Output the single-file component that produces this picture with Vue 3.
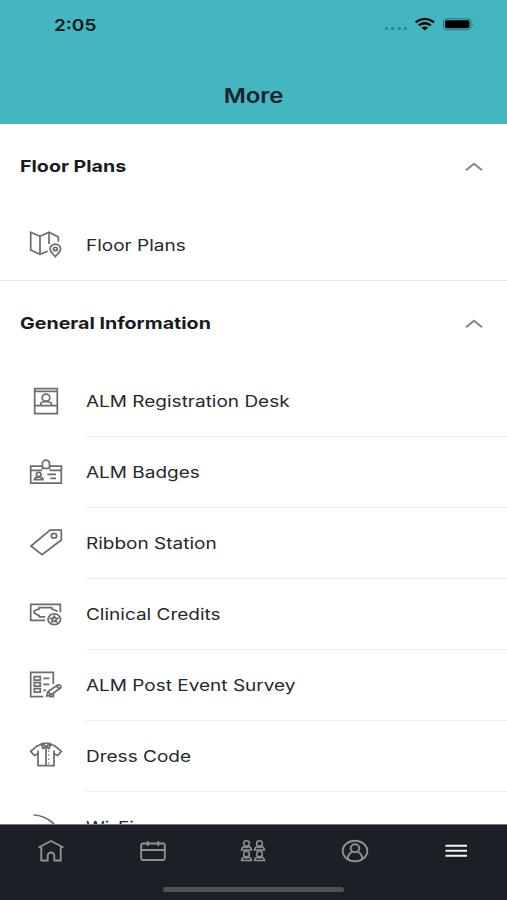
<script setup>
import { ref } from "vue";

const sections = ref([
  {
    title: "Floor Plans",
    open: true,
    items: [{ label: "Floor Plans", icon: "map" }],
  },
  {
    title: "General Information",
    open: true,
    items: [
      { label: "ALM Registration Desk", icon: "desk" },
      { label: "ALM Badges", icon: "badge" },
      { label: "Ribbon Station", icon: "tag" },
      { label: "Clinical Credits", icon: "credit" },
      { label: "ALM Post Event Survey", icon: "survey" },
      { label: "Dress Code", icon: "shirt" },
      { label: "Wi-Fi", icon: "wifi" },
    ],
  },
]);

const icons = {
  map: [
    "M19.7 22.3 12 25.3 2.7 21V3.3L12 7.3l9-4 9.3 4.7v4.7",
    "M12 7.3v18M21 3.3V15",
    "M27.3 27.6c-3-3.4-5.3-5.3-5.3-7.7a5.3 4.7 0 0 1 10.6 0c0 2.4-2.3 4.3-5.3 7.7z",
    "M25.3 20a2 1.7 0 1 0 4 0a2 1.7 0 1 0-4 0z",
  ],
  desk: [
    "M6.7 3.7h22.6v25H6.7z",
    "M6.7 6.3h22.6M6.7 20.7h22.6",
    "M14.2 12.7a3.8 3.5 0 1 0 7.6 0a3.8 3.5 0 1 0-7.6 0z",
    "M12.7 20.5v-2.3l3-1.7h4.6l3 1.7v2.3",
  ],
  badge: [
    "M14.3 10H2.7v17h30.6V10H21.7M2.7 14.3h11.6M21.7 14.3h11.6",
    "M14.5 12.3V7.5a3.5 3.3 0 0 1 7 0v4.8z",
    "M8.3 18.5a2.4 2.1 0 1 0 4.8 0a2.4 2.1 0 1 0-4.8 0z",
    "M6.3 23.7c.4-2 1.7-2.4 3-2.6h2.8c1.3.2 2.6.6 3 2.6z",
    "M19.3 18.3H28M22.3 22.3H28",
  ],
  tag: [
    "M22 3h11.3v10L14 27.7 3 19z",
    "M23.3 8.7a2.7 2.4 0 1 0 5.4 0a2.7 2.4 0 1 0-5.4 0z",
  ],
  credit: [
    "M32.3 14.2V6.3H2.7v16h14.5",
    "M17.2 18.9h-6v-1.3l-4.9-2.4v-2.4l4.9-2V9.6h12.5v1.2l4.9 2V14",
    "M20 21.3a6.3 5.3 0 1 0 12.6 0a6.3 5.3 0 1 0-12.6 0z",
    "m26.3 18.2 1 2 2.4.2-1.7 1.5.5 2-2.2-1-2.2 1 .5-2-1.7-1.5 2.4-.2z",
  ],
  survey: [
    "M25.3 15V3.3H2.7v24.4h12.6M20.7 27.7h4.6v-3.4",
    "M6.3 7.7h6v3.4h-6zM6.3 13.7h6v3.4h-6zM6.3 19.7h6v3.4h-6z",
    "M15.3 9.4h6M15.3 15.4h6M15.3 21.4H18",
    "M18.7 27 20 22.6l9.7-6.5c1.6-.8 4.3 1.2 3 2.7l-9.4 6.8zM20 22.6l3.3 3M28.3 17l3.2 2.8",
  ],
  shirt: [
    "M13.3 4.2 9 6 2.7 11.3l3.6 4.2 3.7-1.8v12h16v-12l3.7 1.8 3.6-4.2L27 6l-4.3-1.8",
    "M13.3 4.2l1.2-.9h7l1.2.9L21 8.500l-3-1.700-3 1.700zM14.500 4.300 18 6.800l3.500-2.500",
    "M18 7v18.500M20.300 11h1M20.300 15h1M20.300 19h1M20.300 23h1",
    "M10 10.500v3.200M26 10.500v3.200",
  ],
  wifi: ["M5.500 4q11.500.3 20.500 9"],
};

const people = [
  [2.5, 2],
  [15.5, 2],
  [2.5, 12.5],
  [15.5, 12.5],
];
</script>
<template>
  <div class="screen">
    <header class="header">
      <div class="status">
        <span class="time">2:05</span>
        <svg class="signals" width="92" height="18" viewBox="0 0 92 18">
          <g fill="#000" fill-opacity=".28">
            <circle cx="4.5" cy="13.5" r="1.6" />
            <circle cx="10.8" cy="13.5" r="1.6" />
            <circle cx="17.1" cy="13.5" r="1.6" />
            <circle cx="23.4" cy="13.5" r="1.6" />
          </g>
          <g fill="none" stroke="#000" stroke-width="2.3">
            <path d="M33.6 7.2q9.2-6.6 18.4 0" />
            <path d="M36.8 10.4q6-4.3 12 0" />
          </g>
          <path d="M39.4 12.5q3.4-2 6.8 0l-3.4 2.9z" />
          <rect x="61.5" y="3.8" width="27.5" height="11" rx="3.2" fill="none" stroke="#000" stroke-opacity=".38" />
          <rect x="63" y="5.3" width="24.5" height="8" rx="1.8" />
          <path d="M90.2 7.7q1.8 1.6 0 3.2z" fill-opacity=".45" />
        </svg>
      </div>
      <h1 class="title"><span>More</span></h1>
    </header>

    <main class="content">
      <section v-for="section in sections" :key="section.title" class="section">
        <div class="section-head" @click="section.open = !section.open">
          <h2>{{ section.title }}</h2>
          <svg class="chevron" :class="!section.open && 'closed'" width="20" height="12" viewBox="0 0 20 12">
            <path d="M2 10.3 10 3.8l8 6.5" />
          </svg>
        </div>
        <ul v-if="section.open" class="list">
          <li v-for="item in section.items" :key="item.label" class="item">
            <svg class="icon" width="36" height="32" viewBox="0 0 36 32">
              <path v-for="d in icons[item.icon]" :key="d" :d="d" />
            </svg>
            <div class="item-body">
              <span class="label">{{ item.label }}</span>
            </div>
          </li>
        </ul>
      </section>
    </main>

    <footer class="footer">
      <nav class="tabs">
        <a class="tab">
          <svg width="30" height="26" viewBox="0 0 30 26">
            <path d="M2.5 9.500 15 3l12.500 6.500M5.300 8.500v14h6.400v-4.700a3.300 3.300 0 0 1 6.600 0v4.700h6.400v-14" />
          </svg>
        </a>
        <a class="tab calendar">
          <svg width="30" height="26" viewBox="0 0 30 26">
            <path d="M4.700 5.500h20.600q1.500 0 1.500 1.500v13.500q0 1.500-1.500 1.500H4.700q-1.500 0-1.500-1.500V7q0-1.500 1.500-1.500zM3.200 12h23.600M9.700 3v5M20.300 3v5" />
          </svg>
        </a>
        <a class="tab">
          <svg class="people" width="30" height="26" viewBox="0 0 30 26">
            <g v-for="([x, y], i) in people" :key="i" :transform="`translate(${x} ${y})`">
              <ellipse cx="6" cy="3.5" rx="2.9" ry="2.7" />
              <path d="M1 10c.2-2.400 1.300-3 3-3.500.9 1.300 3.100 1.300 4 0 1.700.5 2.800 1.100 3 3.500z" />
            </g>
          </svg>
        </a>
        <a class="tab">
          <svg width="30" height="26" viewBox="0 0 30 26">
            <ellipse cx="15" cy="13" rx="12.3" ry="10.2" />
            <ellipse cx="15" cy="10.2" rx="4.3" ry="3.9" />
            <path d="M7.500 20.800c.5-4.300 2-6 5-7M22.500 20.800c-.5-4.300-2-6-5-7" />
          </svg>
        </a>
        <a class="tab active">
          <svg width="30" height="26" viewBox="0 0 30 26">
            <path d="M4.500 7.700H26M4.500 12.700H26M4.500 17.700H26" />
          </svg>
        </a>
      </nav>
      <div class="home-bar"></div>
    </footer>
  </div>
</template>
<style>
body {
  margin: 0;
}
</style>
<style scoped>
.screen {
  width: 507px;
  height: 900px;
  display: flex;
  flex-direction: column;
  overflow: hidden;
  background: #fff;
  color: #26282a;
  font-family: Inter, "Liberation Sans", sans-serif;
}
.header {
  flex: none;
  height: 124px;
  background: #44b6c0;
}
.status {
  height: 48px;
  padding: 0 33px 0 54px;
  display: flex;
  align-items: center;
  justify-content: space-between;
}
.time {
  padding-top: 1px;
  color: #06171a;
  font-size: 16.5px;
  font-weight: 600;
  transform: scaleX(1.15);
  transform-origin: left;
}
.signals {
  display: block;
}
.title {
  margin: 0;
  height: 76px;
  line-height: 96px;
  text-align: center;
  font-size: 20.5px;
  font-weight: 600;
  color: #14232b;
}
.title span {
  display: inline-block;
  transform: scaleX(1.17);
}
.content {
  flex: 1;
  min-height: 0;
  overflow: hidden;
}
.section-head {
  height: 85px;
  box-sizing: border-box;
  padding: 0 23px 2px 20px;
  display: flex;
  align-items: center;
  justify-content: space-between;
}
.section:first-child .section-head {
  height: 86px;
}
h2 {
  margin: 0;
  font-size: 16.5px;
  font-weight: 700;
  color: #191b1d;
  transform: scaleX(1.19);
  transform-origin: left;
}
.chevron path {
  fill: none;
  stroke: #858585;
  stroke-width: 2;
}
.chevron.closed {
  transform: rotate(180deg);
}
.list {
  margin: 0;
  padding: 0;
  list-style: none;
}
.item {
  height: 71px;
  padding-left: 28px;
  display: flex;
}
.icon {
  flex: none;
  margin-top: 19px;
  fill: none;
  stroke: #6b6e70;
  stroke-width: 1.75;
}
.item-body {
  flex: 1;
  margin-left: 22px;
  border-bottom: 1px solid #ededed;
  display: flex;
  align-items: center;
}
.section:first-child .item {
  box-sizing: border-box;
  border-bottom: 1px solid #e8e8e8;
}
.section:first-child .item-body {
  border-bottom: 0;
}
.label {
  font-size: 16px;
  white-space: nowrap;
  transform: scaleX(1.187);
  transform-origin: left;
}
.footer {
  flex: none;
  height: 76px;
  background: #1b2027;
  border-top: 1px solid #777a7e;
  box-sizing: border-box;
  display: flex;
  flex-direction: column;
  align-items: center;
}
.tabs {
  width: 100%;
  height: 52px;
  display: grid;
  grid-template-columns: repeat(5, 1fr);
}
.tab {
  display: flex;
  align-items: center;
  justify-content: center;
}
.tab.calendar {
  padding-left: 2px;
}
.tab svg {
  fill: none;
  stroke: #8d9195;
  stroke-width: 1.9;
}
.tab .people {
  stroke-width: 1.5;
}
.tab.active svg {
  stroke: #f2f3f4;
}
.home-bar {
  width: 181px;
  height: 5px;
  margin-top: 10px;
  border-radius: 3px;
  background: #505257;
}
</style>
